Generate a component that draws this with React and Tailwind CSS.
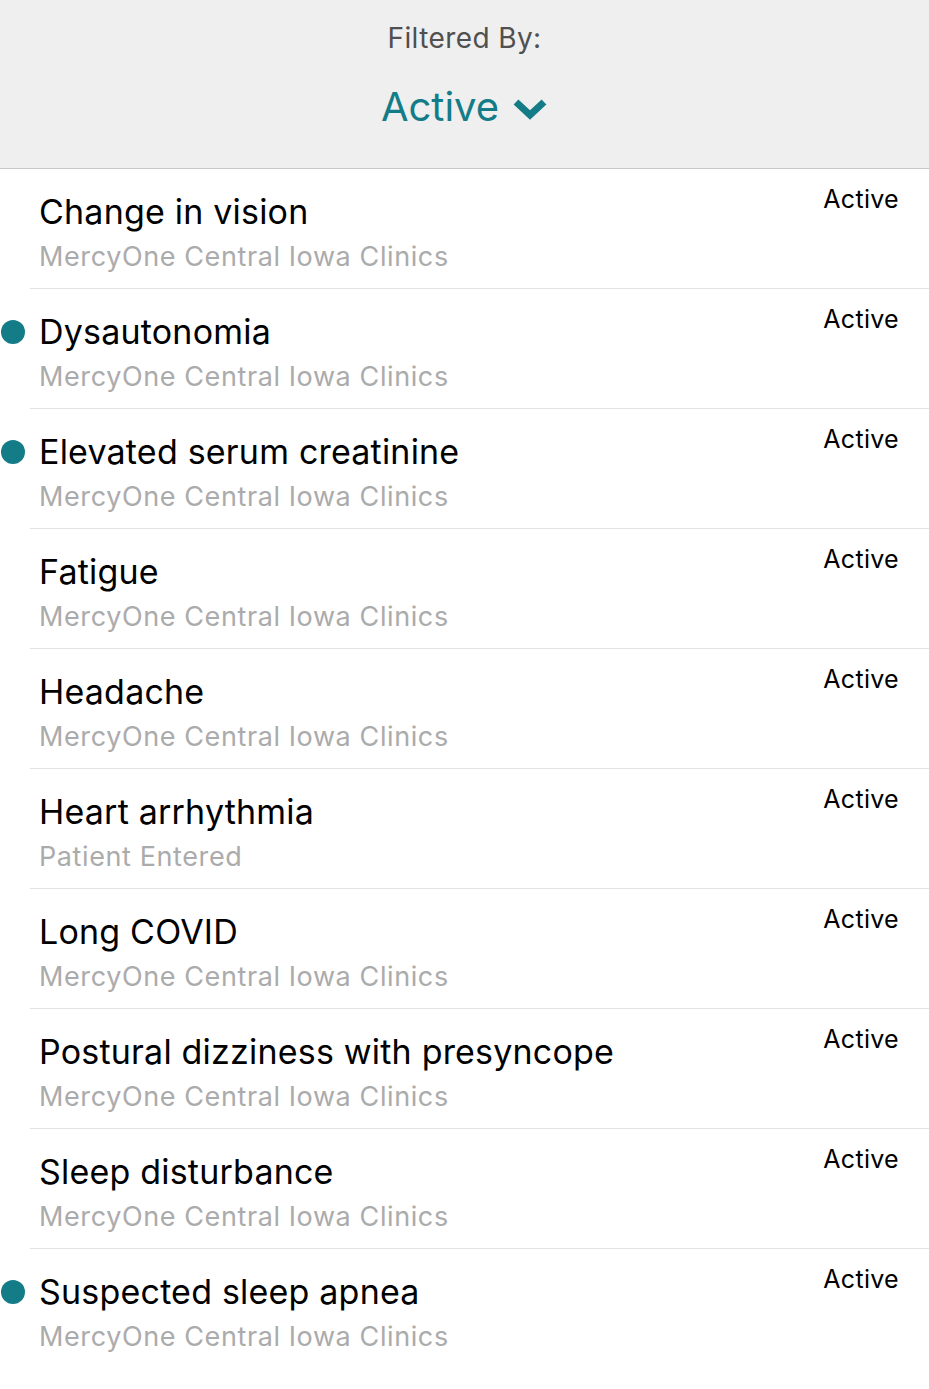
import React from "react";

const items = [
  { t: "Change in vision", s: "MercyOne Central Iowa Clinics", dot: false },
  { t: "Dysautonomia", s: "MercyOne Central Iowa Clinics", dot: true },
  { t: "Elevated serum creatinine", s: "MercyOne Central Iowa Clinics", dot: true },
  { t: "Fatigue", s: "MercyOne Central Iowa Clinics", dot: false },
  { t: "Headache", s: "MercyOne Central Iowa Clinics", dot: false },
  { t: "Heart arrhythmia", s: "Patient Entered", dot: false },
  { t: "Long COVID", s: "MercyOne Central Iowa Clinics", dot: false },
  { t: "Postural dizziness with presyncope", s: "MercyOne Central Iowa Clinics", dot: false },
  { t: "Sleep disturbance", s: "MercyOne Central Iowa Clinics", dot: false },
  { t: "Suspected sleep apnea", s: "MercyOne Central Iowa Clinics", dot: true },
];

export default function App() {
  return (
    <div className="w-[929px] min-h-[1389px] bg-white" style={{ fontFamily: "Inter, 'Noto Sans', sans-serif" }}>
      <div className="h-[169px] bg-[#efefef] border-b border-[#c8c8c8] flex flex-col items-center">
        <div className="mt-[22px] text-[28px] leading-[32px] tracking-[0.4px] text-[#505050]">Filtered By:</div>
        <div className="mt-[31px] flex items-center gap-[13px] text-[#147c87]">
          <span className="text-[40px] leading-[44px]">Active</span>
          <svg width="36" height="24" viewBox="0 0 36 24" className="mt-[4px]">
            <path d="M4 5 L18 18 L32 5" fill="none" stroke="#147c87" strokeWidth="7" strokeLinejoin="miter" strokeLinecap="butt" />
          </svg>
        </div>
      </div>
      {items.map((it, i) => (
        <div key={i} className="flex h-[120px]">
          <div className="w-[30px] shrink-0">
            {it.dot && <div className="ml-[1px] mt-[31px] w-[24px] h-[24px] rounded-full bg-[#147c87]" />}
          </div>
          <div className={"flex-1 flex justify-between pl-[9px] pr-[30px] " + (i < items.length - 1 ? "border-b border-[#e3e3e3]" : "")}>
            <div className="pt-[23px]">
              <div className="text-[34px] leading-[40px] tracking-[0.2px] text-black">{it.t}</div>
              <div className="mt-[5px] text-[27px] leading-[40px] text-[#ababab] tracking-[0.6px]">{it.s}</div>
            </div>
            <div className="pt-[15px] text-[25px] leading-[30px] tracking-[0.3px] text-black">Active</div>
          </div>
        </div>
      ))}
    </div>
  );
}
